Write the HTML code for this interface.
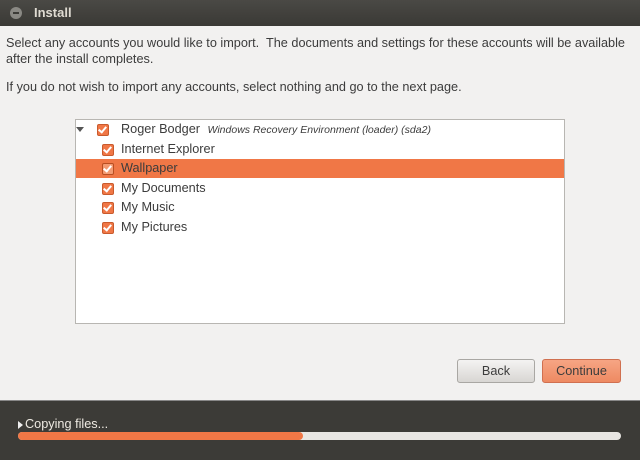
<!DOCTYPE html><html><head><style>
body{margin:0;width:640px;height:459px;overflow:hidden;background:#f2f1f0;font-family:"Liberation Sans",sans-serif;font-size:12.7px;color:#3c3c3c;position:relative}
.a{position:absolute}
.row{position:absolute;left:1px;right:1px;height:19px;line-height:19px}
.cb{position:absolute;width:10px;height:10px;border:1px solid #c95a2c;background:#f07746;border-radius:2px;top:4px}
.cb:after{content:"";position:absolute;left:2px;top:0px;width:3px;height:6px;border:solid #fff;border-width:0 2px 2px 0;transform:rotate(40deg)}
.btn{position:absolute;height:22px;line-height:22px;text-align:center;border-radius:3px;font-size:12.7px}
</style></head><body>
<div class="a" style="left:0;top:0;width:640px;height:26px;background:linear-gradient(#4a4945,#3a3935);"></div>
<div class="a" style="left:10px;top:7px;width:12px;height:12px;border-radius:50%;background:#8a8984;"></div>
<div class="a" style="left:13px;top:12px;width:6px;height:2px;background:#3c3b37"></div>
<div class="a" style="left:34px;top:5px;color:#dfdbd2;font-weight:bold;font-size:13px">Install</div>
<div class="a" style="left:6px;top:35px;line-height:16px;white-space:nowrap">Select any accounts you would like to import.&nbsp; The documents and settings for these accounts will be available<br>after the install completes.</div>
<div class="a" style="left:6px;top:80px">If you do not wish to import any accounts, select nothing and go to the next page.</div>
<div class="a" style="left:75px;top:119px;width:488px;height:203px;background:#fff;border:1px solid #b8b6b2">
<div class="a" style="left:0;top:7px;width:0;height:0;border-left:4px solid transparent;border-right:4px solid transparent;border-top:5px solid #555"></div>
<div class="row" style="top:0"><div class="cb" style="left:20px"></div><span class="a" style="left:44px">Roger Bodger <i style="font-size:10.5px;margin-left:4px">Windows Recovery Environment (loader) (sda2)</i></span></div>
<div class="row" style="top:19.6px"><div class="cb" style="left:25px"></div><span class="a" style="left:44px">Internet Explorer</span></div>
<div class="row" style="top:39.2px;background:#f07746;left:0;right:0"><div class="cb" style="left:26px;border-color:#b84e22;background:#f39a72"></div><span class="a" style="left:45px">Wallpaper</span></div>
<div class="row" style="top:58.8px"><div class="cb" style="left:25px"></div><span class="a" style="left:44px">My Documents</span></div>
<div class="row" style="top:78.4px"><div class="cb" style="left:25px"></div><span class="a" style="left:44px">My Music</span></div>
<div class="row" style="top:98px"><div class="cb" style="left:25px"></div><span class="a" style="left:44px">My Pictures</span></div>
</div>
<div class="btn" style="left:457px;top:359px;width:76px;border:1px solid #a9a7a3;background:linear-gradient(#f4f3f2,#d8d6d3)">Back</div>
<div class="btn" style="left:542px;top:359px;width:77px;border:1px solid #d07050;background:linear-gradient(#f6a584,#ee8a62)">Continue</div>
<div class="a" style="left:0;top:400px;width:640px;height:59px;background:#3c3b37;border-top:1px solid #888"></div>
<div class="a" style="left:18px;top:421px;width:0;height:0;border-top:4px solid transparent;border-bottom:4px solid transparent;border-left:5px solid #eee"></div>
<div class="a" style="left:25px;top:417px;color:#eeeae2">Copying files...</div>
<div class="a" style="left:18px;top:432px;width:603px;height:8px;background:#e8e6e2;border-radius:4px"></div>
<div class="a" style="left:18px;top:432px;width:285px;height:8px;background:#f07746;border-radius:4px"></div>
</body></html>
